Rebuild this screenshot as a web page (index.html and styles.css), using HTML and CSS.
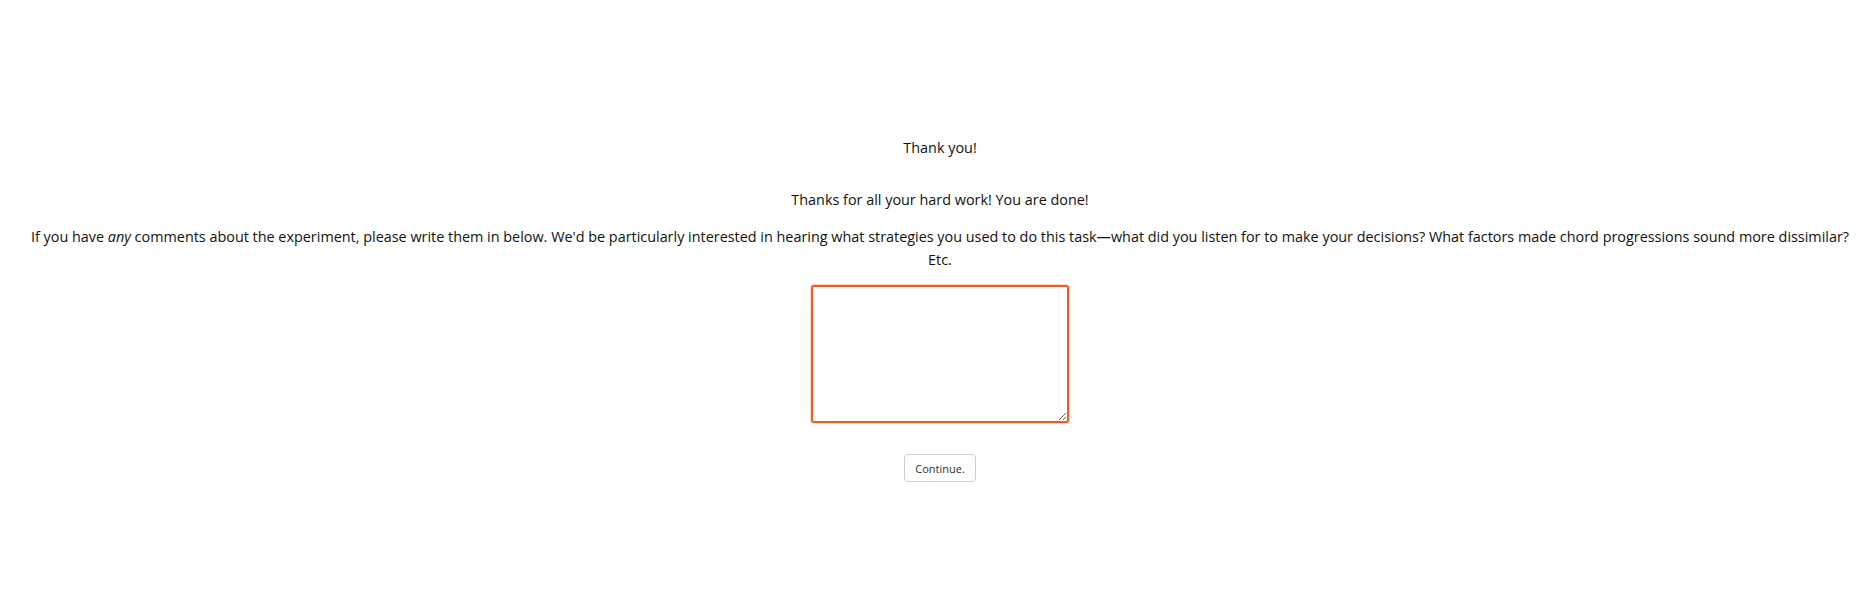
FILE: index.html
```html
<!DOCTYPE html>
<html>
<head>
<meta charset="utf-8">
<link rel="stylesheet" href="styles.css">
</head>
<body>
<div class="page">
  <div class="title">Thank you!</div>
  <p>Thanks for all your hard work! You are done!</p>
  <p>If you have <em>any</em> comments about the experiment, please write them in below. We'd be particularly interested in hearing what strategies you used to do this task—what did you listen for to make your decisions? What factors made chord progressions sound more dissimilar? Etc.</p>
  <textarea class="comments" autofocus></textarea>
  <button class="continue" type="button">Continue.</button>
</div>
</body>
</html>
```

FILE: styles.css
```css
html, body {
  margin: 0;
  padding: 0;
  background: #fff;
}
body {
  font-family: "Open Sans", "DejaVu Sans", sans-serif;
  font-size: 14.4px;
  color: #111;
}
.page {
  padding: 136px 21px 0 25px;
  text-align: center;
  display: flex;
  flex-direction: column;
  align-items: center;
}
.title {
  line-height: 23px;
  margin: 0 0 29px;
}
.page p {
  line-height: 23px;
  margin: 0 0 14px;
}
.comments {
  box-sizing: border-box;
  width: 258px;
  height: 138px;
  margin: 0;
  border: 2px solid #ee5a2b;
  border-radius: 3px;
  box-shadow: 0 0 0 1px #fcd8ca;
  outline: none;
  padding: 2px;
  font-family: "Open Sans", sans-serif;
  font-size: 13px;
  resize: both;
  background: #fff;
}
.continue {
  margin-top: 31px;
  box-sizing: border-box;
  width: 72px;
  height: 28px;
  padding: 0;
  font-family: "Open Sans", sans-serif;
  font-size: 11px;
  color: #333;
  background: #fff;
  border: 1px solid #cfcfcf;
  border-radius: 4px;
}
```
